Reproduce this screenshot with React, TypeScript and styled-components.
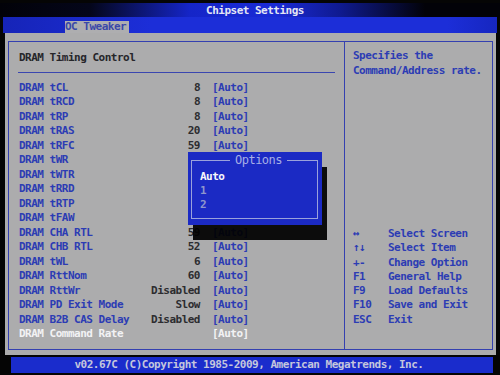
import React from "react";
import styled, { createGlobalStyle } from "styled-components";

const GlobalStyle = createGlobalStyle`
  html, body {
    margin: 0;
    padding: 0;
    background: #000;
  }
`;

const Screen = styled.div`
  position: relative;
  width: 500px;
  height: 375px;
  overflow: hidden;
  background: #050505;
  font-family: "DejaVu Sans Mono", "Liberation Mono", monospace;
  font-size: 11px;
  font-weight: bold;
  letter-spacing: -0.5px;
  line-height: 14.5px;
`;

const TitleBar = styled.div`
  margin-top: 3px;
  height: 14px;
  line-height: 15px;
  text-align: center;
  padding-left: 10px;
  color: #e4e6f4;
  background: linear-gradient(
    to right,
    #020208 0%,
    #04061a 18%,
    #1525c8 38%,
    #1a2ad6 55%,
    #0f1a90 68%,
    #020208 85%
  );
`;

const TabBar = styled.div`
  display: flex;
  align-items: flex-end;
  height: 16px;
  margin: 0 3px;
  padding-left: 62px;
  background: linear-gradient(to right, #1624b8, #1c2ed8 30%, #1c2ed8 90%, #1626c0);
`;

const Tab = styled.div`
  height: 12px;
  line-height: 12px;
  padding-right: 3px;
  background: #aeaeb0;
  color: #3a48a8;
`;

const Panel = styled.div`
  height: 322px;
  margin: 0 4px 0 5px;
  padding: 8px 3px 5px 3px;
  box-sizing: border-box;
  background: #acacad;
`;

const Frame = styled.div`
  display: grid;
  grid-template-columns: 336px 1fr;
  height: 100%;
  border: 1px solid #3440b0;
  box-sizing: border-box;
`;

const LeftBox = styled.div`
  padding: 9px 9px 0 9px;
  border-right: 1px solid #3440b0;
`;

const Header = styled.div`
  color: #26262a;
  padding-left: 1px;
`;

const Divider = styled.div`
  height: 1px;
  margin: 6px 0 8px;
  background: #3a46b0;
`;

const Row = styled.div<{ $active?: boolean }>`
  display: grid;
  grid-template-columns: 119px 62px 47px;
  padding-left: 1px;
  color: ${(p) => (p.$active ? "#f2f2f4" : "#2c3cb4")};
`;

const Value = styled.span`
  text-align: right;
  color: #2c2c30;
`;

const Auto = styled.span<{ $active?: boolean }>`
  padding-left: 12px;
  color: ${(p) => (p.$active ? "#f2f2f4" : "#2c3cb4")};
`;

const RightBox = styled.div`
  display: flex;
  flex-direction: column;
  justify-content: space-between;
  padding: 7px 4px 22px 8px;
  color: #2c3cb4;
`;

const Help = styled.div``;

const Keys = styled.div`
  display: grid;
  grid-template-columns: 35px 1fr;
  line-height: 14.3px;
`;

const BottomBar = styled.div`
  height: 16px;
  line-height: 16px;
  margin: 2px 7px 0 11px;
  text-align: center;
  padding-right: 6px;
  color: #c4c6dc;
  background: #1a2ccc;
`;

const Popup = styled.div`
  position: absolute;
  left: 188px;
  top: 152px;
  width: 134px;
  height: 73px;
  box-sizing: border-box;
  padding: 1px 4px 6px 3px;
  background: #1b2ac4;
  box-shadow: 5px 15px 0 rgba(0, 0, 0, 0.93);
`;

const OptionFrame = styled.fieldset`
  margin: 0;
  height: 100%;
  box-sizing: border-box;
  padding: 3px 0 0 8px;
  border: 1px solid #9aa2dc;
`;

const OptionTitle = styled.legend`
  margin: 0 auto;
  padding: 0 5px;
  color: #a6aee6;
  font-weight: normal;
  font-size: 12px;
  line-height: 14px;
`;

const OptionItem = styled.div<{ $selected?: boolean }>`
  line-height: 14px;
  color: ${(p) => (p.$selected ? "#f6f6fa" : "#8e96cc")};
`;

const rows: [string, string][] = [
  ["DRAM tCL", "8"],
  ["DRAM tRCD", "8"],
  ["DRAM tRP", "8"],
  ["DRAM tRAS", "20"],
  ["DRAM tRFC", "59"],
  ["DRAM tWR", ""],
  ["DRAM tWTR", ""],
  ["DRAM tRRD", ""],
  ["DRAM tRTP", ""],
  ["DRAM tFAW", ""],
  ["DRAM CHA RTL", "59"],
  ["DRAM CHB RTL", "52"],
  ["DRAM tWL", "6"],
  ["DRAM RttNom", "60"],
  ["DRAM RttWr", "Disabled"],
  ["DRAM PD Exit Mode", "Slow"],
  ["DRAM B2B CAS Delay", "Disabled"],
];

const keys: [string, string][] = [
  ["↔", "Select Screen"],
  ["↑↓", "Select Item"],
  ["+-", "Change Option"],
  ["F1", "General Help"],
  ["F9", "Load Defaults"],
  ["F10", "Save and Exit"],
  ["ESC", "Exit"],
];

export default function App() {
  return (
    <Screen>
      <GlobalStyle />
      <TitleBar>Chipset Settings</TitleBar>
      <TabBar>
        <Tab>OC Tweaker</Tab>
      </TabBar>
      <Panel>
        <Frame>
          <LeftBox>
            <Header>DRAM Timing Control</Header>
            <Divider />
            {rows.map(([label, value]) => (
              <Row key={label}>
                <span>{label}</span>
                <Value>{value}</Value>
                <Auto>{value ? "[Auto]" : ""}</Auto>
              </Row>
            ))}
            <Row $active>
              <span>DRAM Command Rate</span>
              <Value />
              <Auto $active>[Auto]</Auto>
            </Row>
          </LeftBox>
          <RightBox>
            <Help>
              Specifies the
              <br />
              Command/Address rate.
            </Help>
            <Keys>
              {keys.map(([k, d]) => (
                <React.Fragment key={k}>
                  <span>{k}</span>
                  <span>{d}</span>
                </React.Fragment>
              ))}
            </Keys>
          </RightBox>
        </Frame>
      </Panel>
      <BottomBar>v02.67C (C)Copyright 1985-2009, American Megatrends, Inc.</BottomBar>
      <Popup>
        <OptionFrame>
          <OptionTitle>Options</OptionTitle>
          <OptionItem $selected>Auto</OptionItem>
          <OptionItem>1</OptionItem>
          <OptionItem>2</OptionItem>
        </OptionFrame>
      </Popup>
    </Screen>
  );
}
